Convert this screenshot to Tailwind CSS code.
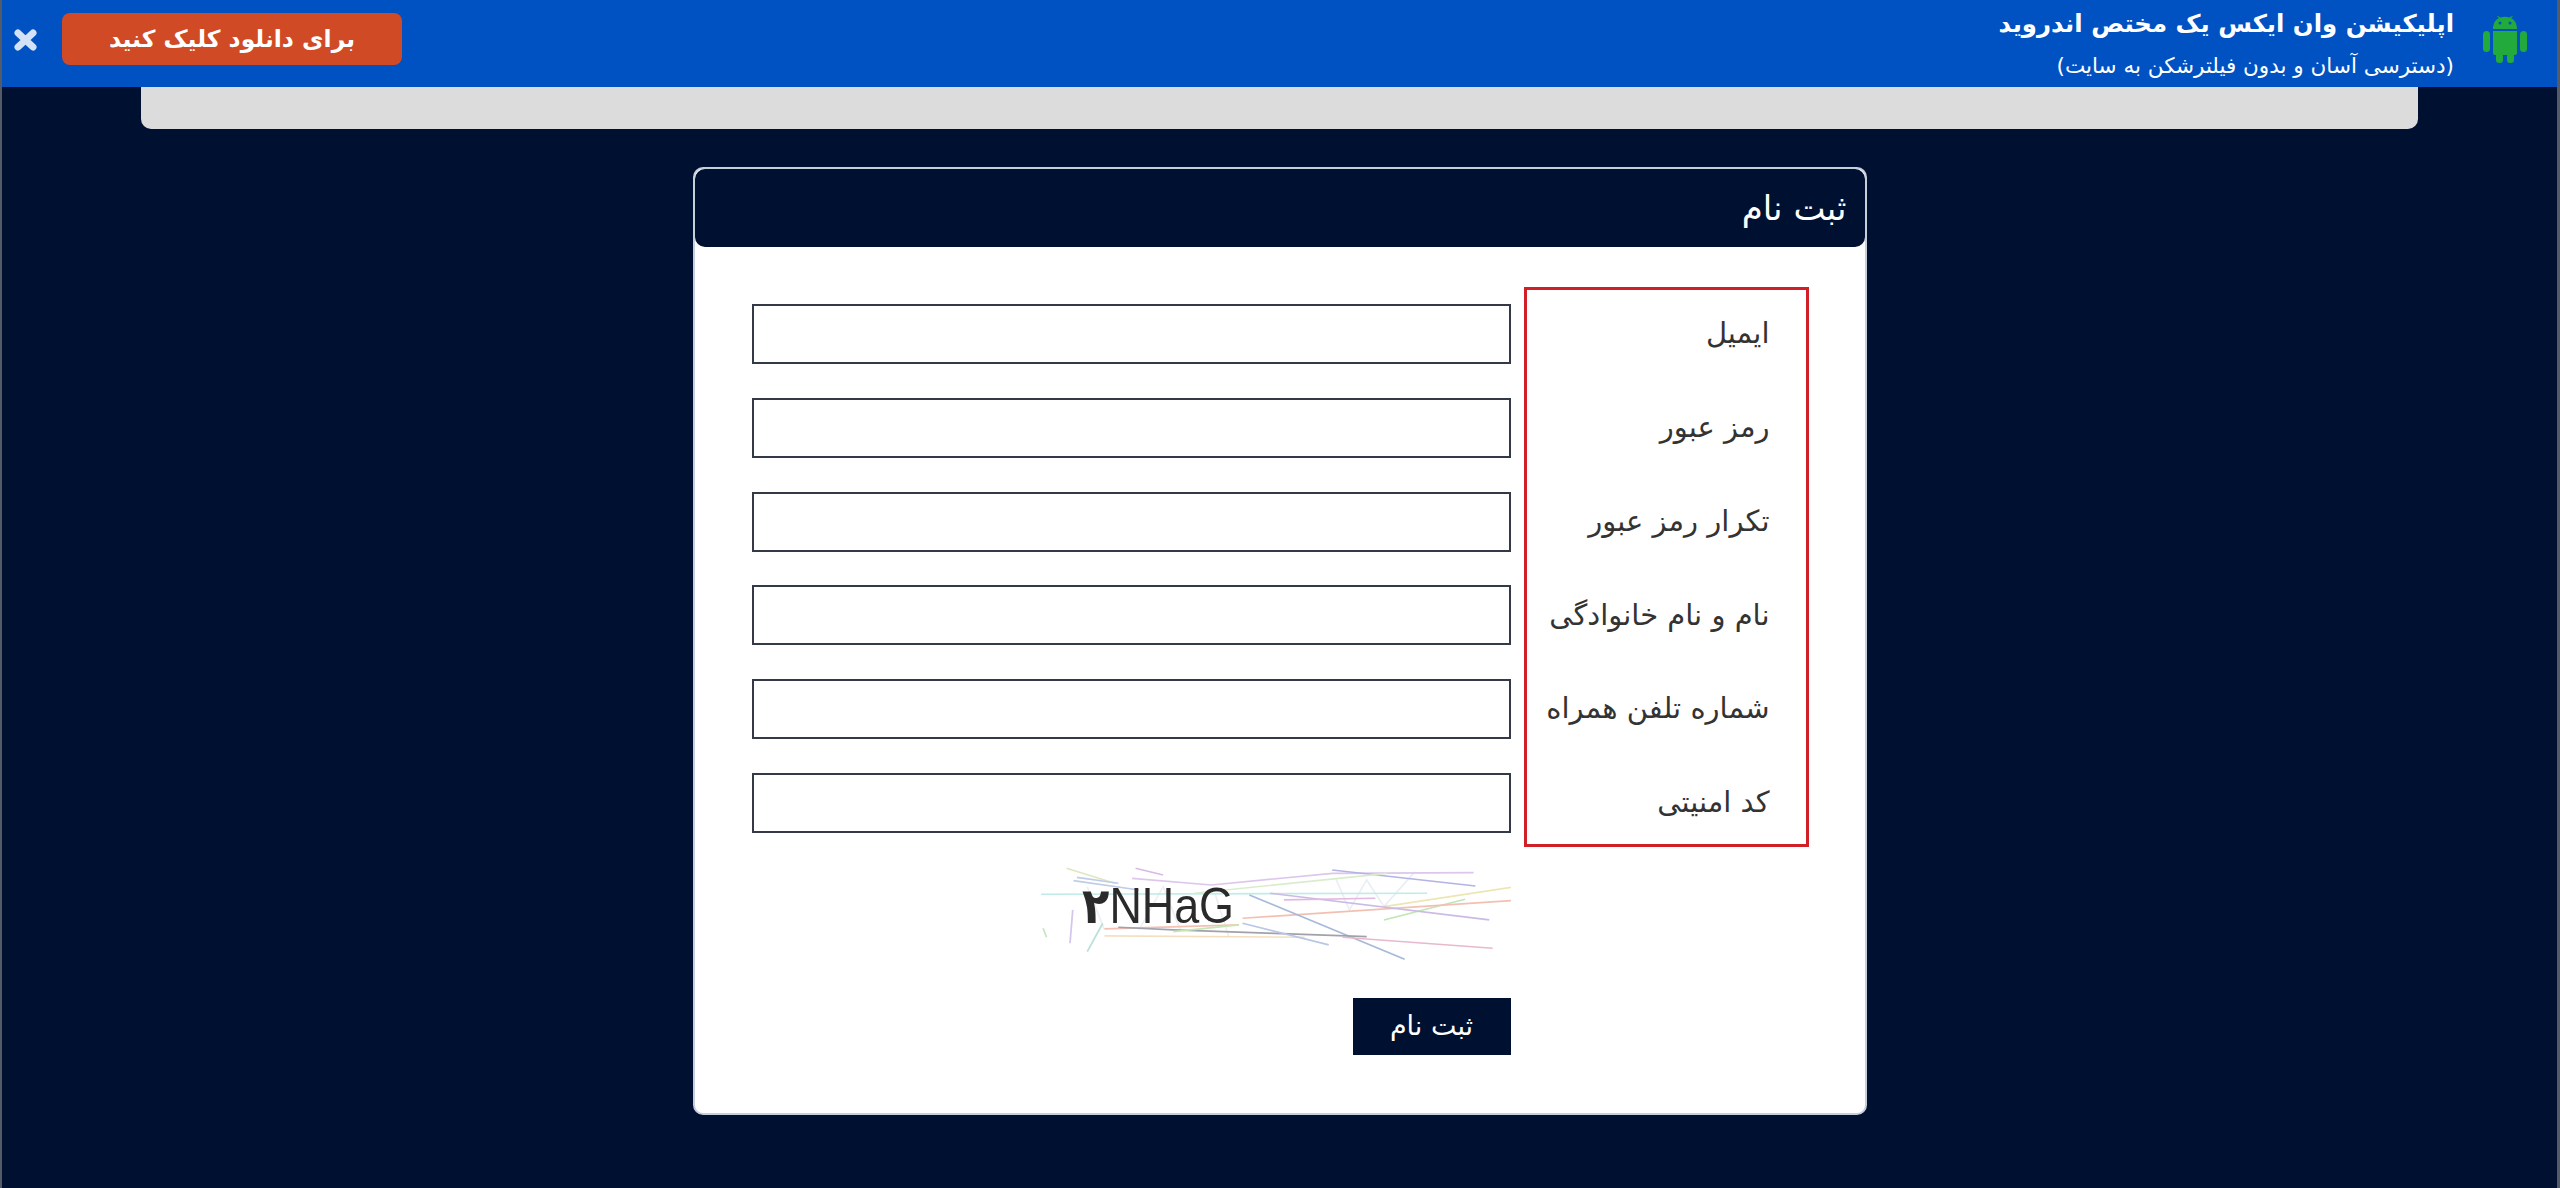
<!DOCTYPE html>
<html lang="fa" dir="rtl">
<head>
<meta charset="UTF-8" />
<title>ثبت نام</title>
<script src="https://cdn.jsdelivr.net/npm/@tailwindcss/browser@4"></script>
</head>
<body class="bg-[#001030] border-l-2 border-r-[3px] border-[#555b66] min-h-[1188px] font-['DejaVu_Sans',sans-serif] text-[#333]">

<!-- بنر اندروید -->
<div class="h-[87px] bg-[#0052c2] flex items-start pr-[30px] pl-[12px] text-white">
    <svg class="w-[44px] h-[47px] mt-[16px] shrink-0" viewBox="0 0 44 47" fill="#22aa3c">
        <path d="M10 13C10 7 13 3.500 16 2L14 0L15 0L17.500 1.500C20 .5 24 .5 26.500 1.500L29 0L30 0L28 2C31 3.500 34 7 34 13Z" />
        <circle cx="17" cy="7" r="1.500" fill="#0052c2" />
        <circle cx="27" cy="7" r="1.500" fill="#0052c2" />
        <path d="M10 15H34V37Q34 39 32 39H12Q10 39 10 37Z" />
        <rect x="0" y="15" width="7" height="21" rx="3.500" />
        <rect x="37" y="15" width="7" height="21" rx="3.500" />
        <rect x="13" y="37" width="7" height="10" rx="3" />
        <rect x="24" y="37" width="7" height="10" rx="3" />
    </svg>
    <div class="mr-[29px] mt-[8px]">
        <div class="text-[24.4px] leading-[32px] font-bold">اپلیکیشن وان ایکس یک مختص اندروید</div>
        <div class="text-[21.5px] leading-[28px] mt-[12px]">(دسترسی آسان و بدون فیلترشکن به سایت)</div>
    </div>
    <a class="mr-auto mt-[13px] w-[340px] h-[52px] rounded-[8px] bg-[#d04a25] flex items-center justify-center text-[23.5px] font-bold pt-[1px]">برای دانلود کلیک کنید</a>
    <svg class="w-[23px] h-[22px] mr-[25px] mt-[29px] shrink-0" viewBox="0 0 23 22" stroke="#d3e2f7" stroke-width="7" stroke-linecap="round">
        <path d="M4 4L19 18M19 4L4 18" />
    </svg>
</div>

<!-- نوار خاکستری -->
<div class="h-[42px] mx-[139px] bg-[#dcdcdc] rounded-b-[10px]"></div>

<!-- فرم ثبت نام -->
<div class="w-[1174px] mt-[38px] mx-auto bg-white border-2 border-[#c5ceda] rounded-[10px]">
    <div class="h-[78px] bg-[#001030] rounded-[10px] flex items-center pr-[18px] text-white text-[34px]">ثبت نام</div>
    <div class="flex items-start pr-[56px] pl-[57px] pt-[40px] pb-[58px]">
        <div class="w-[285px] h-[560px] border-[3px] border-[#d01f26] pt-[14px] pr-[36px] flex flex-col gap-[33.8px] text-[29px]">
            <div class="h-[60px] flex items-center">ایمیل</div>
            <div class="h-[60px] flex items-center">رمز عبور</div>
            <div class="h-[60px] flex items-center">تکرار رمز عبور</div>
            <div class="h-[60px] flex items-center">نام و نام خانوادگی</div>
            <div class="h-[60px] flex items-center">شماره تلفن همراه</div>
            <div class="h-[60px] flex items-center">کد امنیتی</div>
        </div>
        <div class="mr-[13px] w-[759px] pt-[17px]">
            <div class="flex flex-col gap-[33.8px]">
                <input class="h-[60px] w-full border-2 border-[#333947] bg-white" type="text" />
                <input class="h-[60px] w-full border-2 border-[#333947] bg-white" type="password" />
                <input class="h-[60px] w-full border-2 border-[#333947] bg-white" type="password" />
                <input class="h-[60px] w-full border-2 border-[#333947] bg-white" type="text" />
                <input class="h-[60px] w-full border-2 border-[#333947] bg-white" type="text" />
                <input class="h-[60px] w-full border-2 border-[#333947] bg-white" type="text" />
            </div>
            <!-- کپچا -->
            <div dir="ltr" class="mt-[27px] h-[105px] flex justify-end">
                <svg class="w-[470px] h-[105px] blur-[0.4px]" viewBox="0 0 470 105" fill="none">
                    <g transform="translate(-40,-10) scale(.345,.333)" stroke-width="5" opacity=".8">
                        <path d="M970 85L1010 180L1060 90L1110 170L1200 65" stroke="#e4ebf0" />
                        <path d="M250 110L300 240M400 240L470 110L520 240M620 130L660 260" stroke="#e8edf0" />
                        <path d="M190 55L330 100" stroke="#d8e0b0" />
                        <path d="M210 92L400 120M220 82L340 100" stroke="#b0c0e0" />
                        <path d="M390 55L470 75" stroke="#d0a8e0" />
                        <path d="M380 85L610 105L960 70L1370 68" stroke="#d4b8e8" />
                        <path d="M105 133L1235 130" stroke="#b0e8e0" />
                        <path d="M960 60L1375 108" stroke="#a0a0e0" />
                        <path d="M1110 170L1480 112" stroke="#e8e0a0" />
                        <path d="M1110 210L1345 148" stroke="#b0e0a0" />
                        <path d="M700 205L1480 152" stroke="#f0b0a0" />
                        <path d="M720 135L1170 328" stroke="#90a8d0" />
                        <path d="M780 130L1415 210" stroke="#c0a8e0" />
                        <path d="M820 150L1085 145" stroke="#d8a8d8" />
                        <path d="M560 130L1120 70" stroke="#d0e8c0" />
                        <path d="M208 180L200 280" stroke="#c8b8e8" />
                        <path d="M122 235L132 262" stroke="#b8e0b0" />
                        <path d="M295 220L250 305" stroke="#a8d8d0" />
                        <path d="M300 237L690 225" stroke="#f0b0a0" />
                        <path d="M340 232L500 240L1060 260" stroke="#8a8a98" />
                        <path d="M300 258L880 262" stroke="#f0d8b0" />
                        <path d="M990 262L1425 295" stroke="#e0a8c0" />
                        <path d="M500 245L690 225" stroke="#b8e0a0" />
                        <path d="M700 220L950 285" stroke="#a8b8e0" />
                    </g>
                    <text x="41" y="63" font-family="Liberation Sans, DejaVu Sans, sans-serif" font-size="50" fill="#2a2a2a" textLength="152" lengthAdjust="spacingAndGlyphs"><tspan font-weight="bold">۲</tspan>NHaG</text>
                </svg>
            </div>
            <div class="mt-[33px]">
                <button class="w-[158px] h-[57px] bg-[#001030] text-white text-[27px]">ثبت نام</button>
            </div>
        </div>
    </div>
</div>

</body>
</html>
